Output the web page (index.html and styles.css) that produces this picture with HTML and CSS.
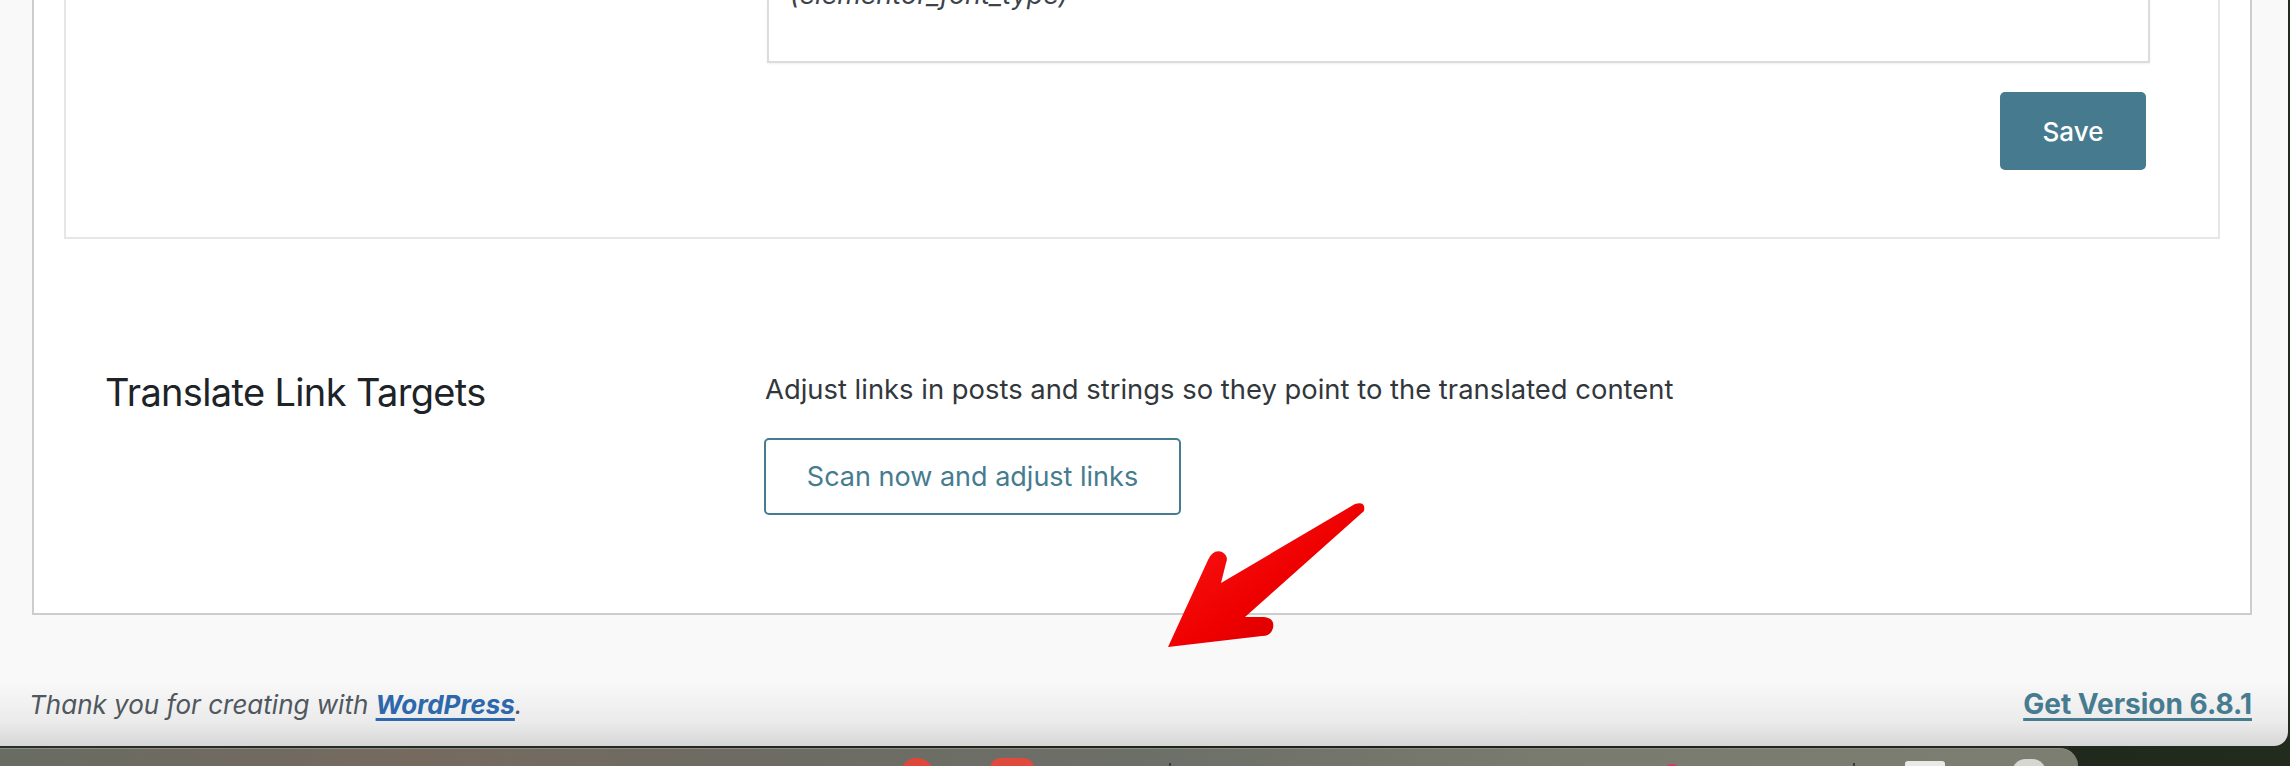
FILE: index.html
```html
<!DOCTYPE html>
<html lang="en">
<head>
<meta charset="utf-8">
<title>Settings</title>
<link rel="stylesheet" href="styles.css">
</head>
<body>
<div class="screen">
  <div class="window">
    <div class="panel">
      <div class="card">
        <div class="textarea"><div class="ta-text">(elementor_font_type)</div></div>
        <div class="actions"><button class="btn-save" type="button">Save</button></div>
      </div>
      <div class="section">
        <h2 class="section-title">Translate Link Targets</h2>
        <div class="section-body">
          <p class="desc">Adjust links in posts and strings so they point to the translated content</p>
          <button class="btn-scan" type="button">Scan now and adjust links</button>
        </div>
      </div>
    </div>
    <footer class="footer">
      <p class="thanks">Thank you for creating with <a class="wp-link" href="#">WordPress</a>.</p>
      <p class="version"><a class="version-link" href="#">Get Version 6.8.1</a></p>
    </footer>
  </div>
  <div class="dock">
    <span class="dock-icon dock-red-circle"></span>
    <span class="dock-icon dock-red-square"></span>
    <span class="dock-sep dock-sep-1"></span>
    <span class="dock-icon dock-pink-dot"></span>
    <span class="dock-sep dock-sep-2"></span>
    <span class="dock-icon dock-doc"></span>
    <span class="dock-icon dock-gear"></span>
  </div>
  <svg class="arrow" width="220" height="160" viewBox="1160 495 220 160" xmlns="http://www.w3.org/2000/svg">
    <defs>
      <linearGradient id="arrowGrad" x1="0" y1="0" x2="1" y2="1">
        <stop offset="0" stop-color="#ff1a1a"/>
        <stop offset="0.55" stop-color="#ee0000"/>
        <stop offset="1" stop-color="#c80000"/>
      </linearGradient>
    </defs>
    <path fill="url(#arrowGrad)" d="M1355,504 Q1366,501 1364,511 L1245,617 L1264,617 Q1275,618 1273,628 Q1271,636 1262,636 L1168,647 L1208,560 Q1213,549 1222,552 Q1229,556 1226,563 L1221,583 Z"/>
  </svg>
</div>
</body>
</html>
```

FILE: styles.css
```css
* {
  box-sizing: border-box;
}

html,
body {
  margin: 0;
  padding: 0;
}

body {
  width: 2290px;
  height: 766px;
  overflow: hidden;
  background: #1e2419;
  font-family: Inter, "Noto Sans", "Liberation Sans", sans-serif;
}

.screen {
  position: relative;
  width: 2290px;
  height: 766px;
  background: linear-gradient(90deg, #2a2f25 0%, #1c2218 60%, #232a1e 100%);
}

.window {
  width: 2288px;
  height: 746px;
  border-bottom-right-radius: 14px;
  overflow: hidden;
  background: linear-gradient(to bottom, #f9f9f9 0px, #f9f9f9 680px, #ebebeb 722px, #d6d6d6 746px);
  display: flex;
  flex-direction: column;
}

.panel {
  flex-shrink: 0;
  margin-left: 32px;
  width: 2220px;
  height: 615px;
  background: #fff;
  border: 2px solid #cdcdcd;
  border-top: 0;
  padding: 0 30px;
}

.card {
  height: 239px;
  border: 2px solid #e6e6e6;
  border-top: 0;
  padding: 0 68px 0 701px;
}

.textarea {
  height: 63px;
  border: 2px solid #dcdcdc;
  border-top: 0;
  padding-left: 21px;
  overflow: hidden;
  box-shadow: 0 1px 2px rgba(0, 0, 0, 0.06);
}

.ta-text {
  margin-top: -19px;
  font-size: 27px;
  line-height: 28px;
  font-style: italic;
  color: #3c434a;
}

.actions {
  display: flex;
  justify-content: flex-end;
  padding-right: 4px;
  margin-top: 29px;
}

.btn-save {
  width: 146px;
  height: 78px;
  border: 0;
  border-radius: 5px;
  background: #467b8f;
  color: #fff;
  font-family: Inter, "Noto Sans", sans-serif;
  font-size: 26px;
  font-weight: 500;
  padding: 0;
}

.section {
  display: flex;
  padding: 130px 0 0 41px;
}

.section-title {
  flex-shrink: 0;
  width: 659px;
  margin: 0;
  font-size: 38px;
  line-height: 46px;
  font-weight: 400;
  letter-spacing: -0.65px;
  color: #1d2327;
}

.section-body {
  display: flex;
  flex-direction: column;
  align-items: flex-start;
}

.desc {
  margin: 0;
  padding-left: 1px;
  font-size: 27.4px;
  line-height: 40px;
  color: #32373c;
}

.btn-scan {
  margin-top: 29px;
  width: 417px;
  height: 77px;
  border: 2px solid #467b90;
  border-radius: 5px;
  background: #fff;
  color: #467b90;
  font-family: Inter, "Noto Sans", sans-serif;
  font-size: 27px;
  padding: 0;
}

.footer {
  display: flex;
  justify-content: space-between;
  align-items: baseline;
  padding: 74px 36px 0 29px;
  font-size: 26px;
  line-height: 30px;
}

.footer p {
  margin: 0;
}

.thanks {
  font-style: italic;
  color: #50575e;
}

.wp-link {
  color: #2c68ab;
  font-weight: 700;
  text-decoration-thickness: 3px;
  text-underline-offset: 4px;
}

.version-link {
  color: #467b90;
  font-weight: 700;
  font-size: 28px;
  text-decoration-thickness: 3px;
  text-underline-offset: 4px;
}

.dock {
  margin-top: 2px;
  width: 2078px;
  height: 18px;
  border-top-right-radius: 30px;
  border-top: 1px solid #8d8c84;
  background: linear-gradient(90deg, #686c62 0%, #6f6a62 10%, #766a5f 20%, #6d6b63 35%, #6c6f68 55%, #7a7b6f 75%, #7d7e72 100%);
  display: flex;
  align-items: flex-start;
  overflow: hidden;
  padding-left: 900px;
}

.dock-icon {
  display: block;
  flex-shrink: 0;
}

.dock-red-circle {
  margin-top: 9px;
  width: 34px;
  height: 34px;
  border-radius: 50%;
  background: #e0463a;
}

.dock-red-square {
  margin-top: 9px;
  margin-left: 56px;
  width: 44px;
  height: 40px;
  border-radius: 10px;
  background: #e04a3d;
}

.dock-sep {
  display: block;
  flex-shrink: 0;
  margin-top: 14px;
  width: 2px;
  height: 10px;
  background: #3d3c38;
}

.dock-sep-1 {
  margin-left: 135px;
}

.dock-pink-dot {
  margin-top: 15px;
  margin-left: 491px;
  width: 20px;
  height: 20px;
  border-radius: 50%;
  background: #d63a5a;
}

.dock-sep-2 {
  margin-left: 171px;
}

.dock-doc {
  margin-top: 12px;
  margin-left: 50px;
  width: 40px;
  height: 30px;
  border-radius: 3px;
  background: #e9e9e6;
}

.dock-gear {
  margin-top: 10px;
  margin-left: 67px;
  width: 34px;
  height: 34px;
  border-radius: 40% 40% 0 0;
  background: #d7d7d2;
}

.arrow {
  position: absolute;
  left: 1160px;
  top: 495px;
}
```
